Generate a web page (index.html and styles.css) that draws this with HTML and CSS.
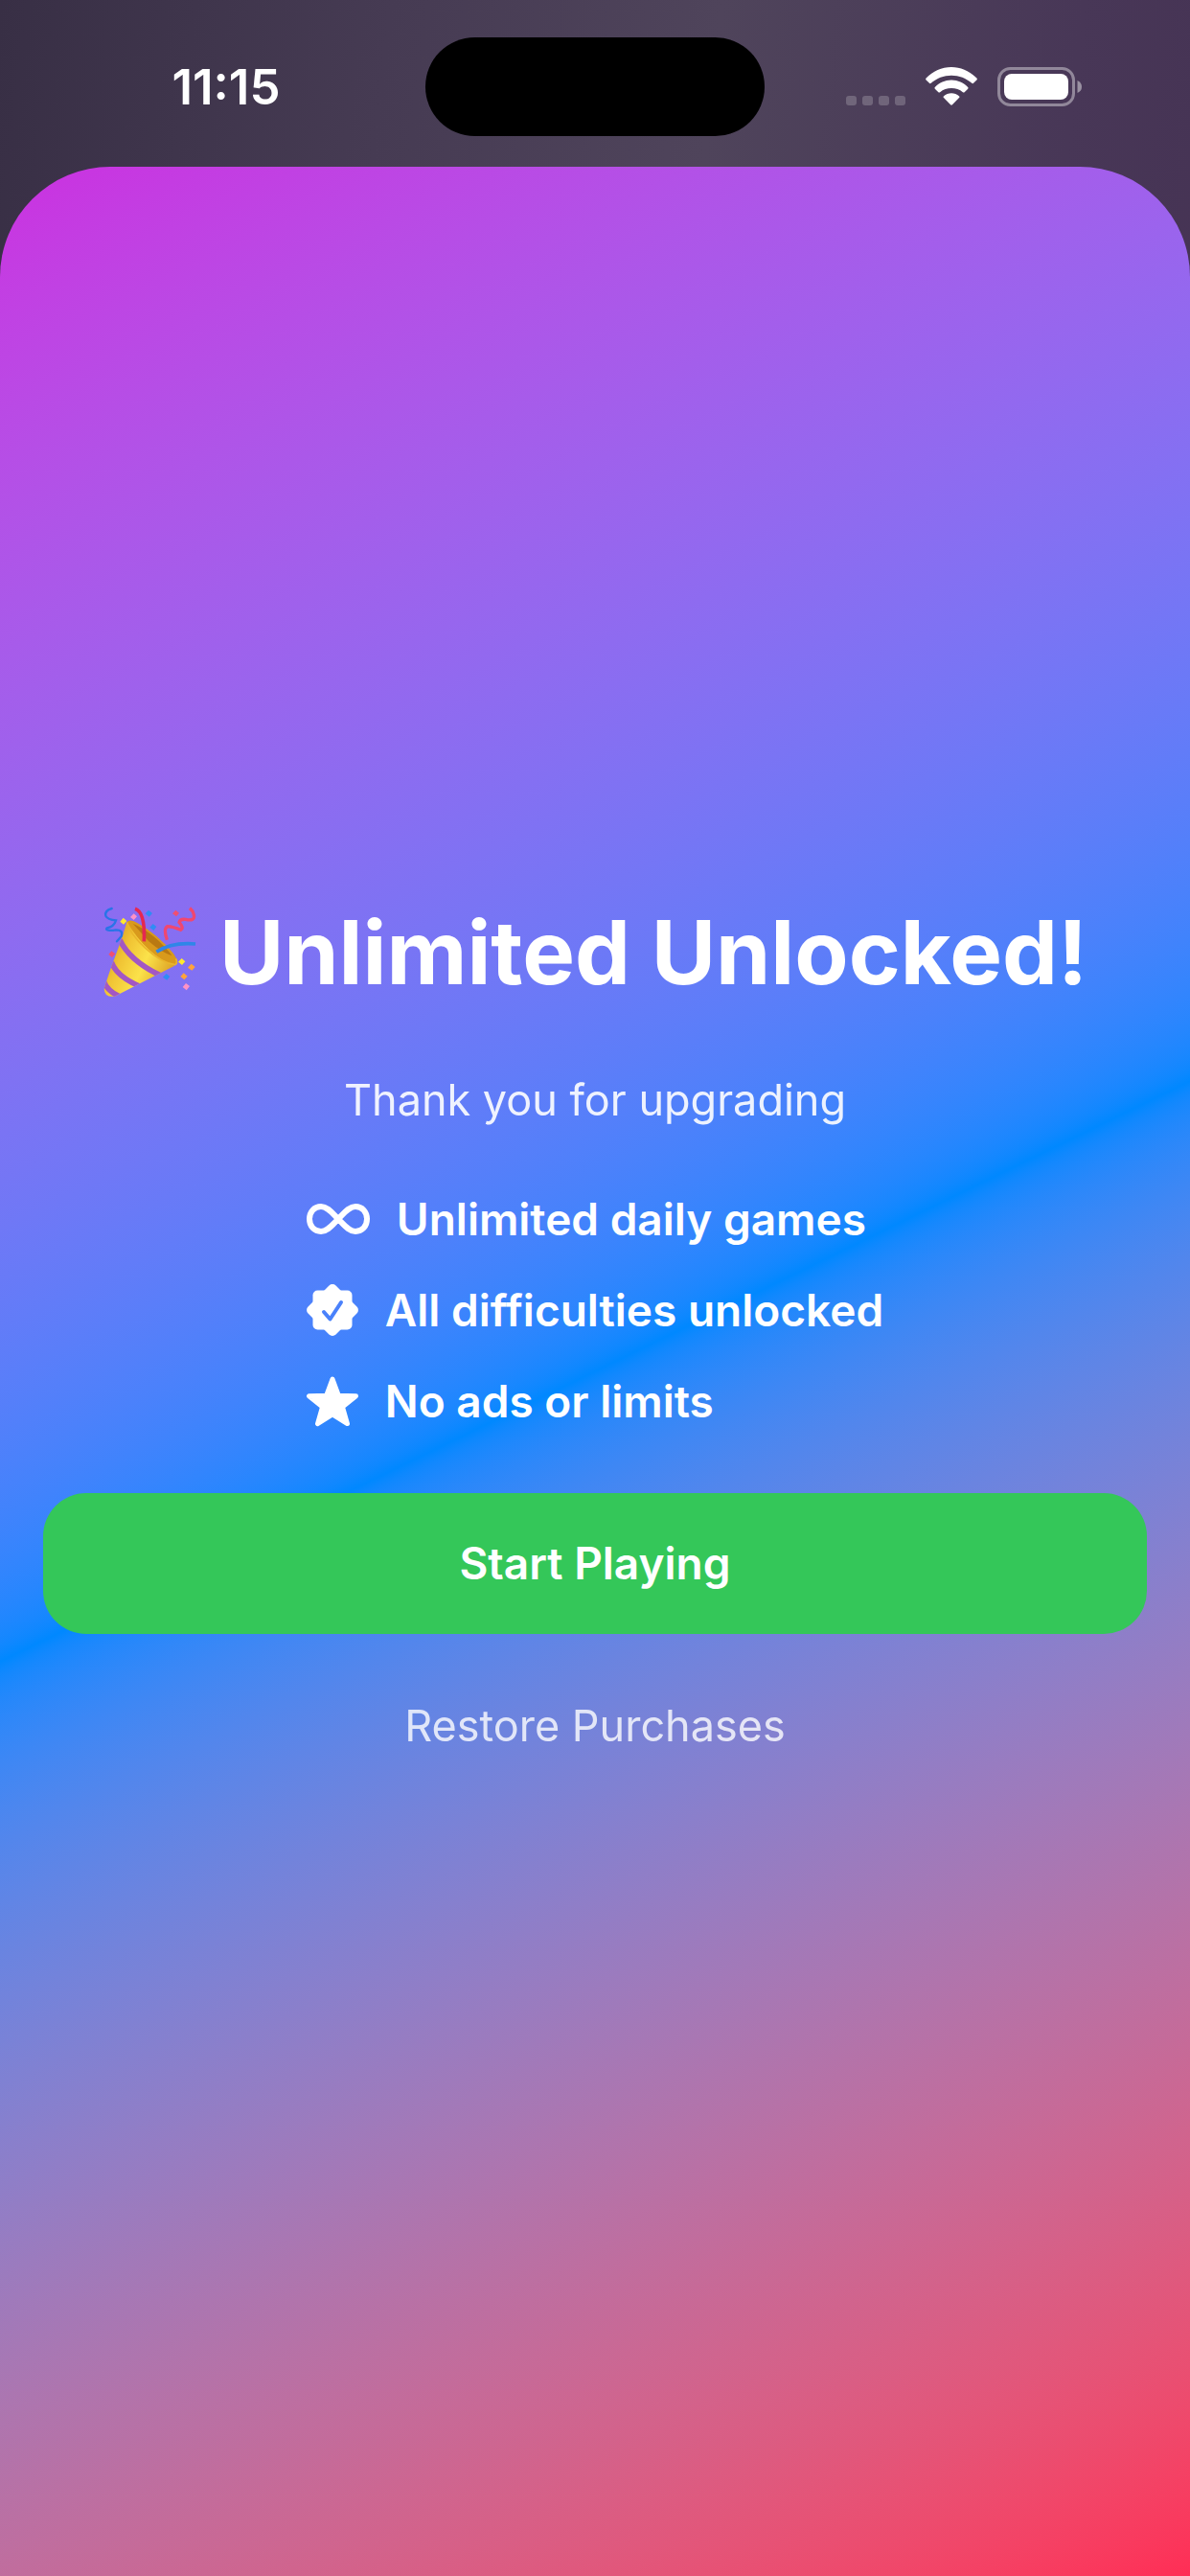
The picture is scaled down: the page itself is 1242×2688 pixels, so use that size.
FILE: index.html
```html
<!DOCTYPE html>
<html lang="en">
    <head>
        <title>Unlimited Unlocked</title>
        <meta charset="UTF-8">
        <meta name="viewport" content="width=device-width, initial-scale=1.0">
        <link rel="stylesheet" href="styles.css">
    </head>
    <body>
        <header class="status-bar">
            <div class="time">11:15</div>
            <div class="island"></div>
            <div class="indicators">
                <svg class="signal" width="62" height="40" viewBox="0 0 62 40">
                    <rect x="0" y="30" width="11" height="10" rx="3"/>
                    <rect x="17" y="30" width="11" height="10" rx="3"/>
                    <rect x="34" y="30" width="11" height="10" rx="3"/>
                    <rect x="51" y="30" width="11" height="10" rx="3"/>
                </svg>
                <svg width="54" height="40" viewBox="0 0 54 40">
                    <g fill="#fff">
                        <path d="M0.6 11.6 C7.5 4.400 17 0 27 0 S46.500 4.400 53.400 11.600 Q54.300 12.500 53.400 13.400 L50 16.800 Q49.200 17.600 48.300 16.800 C42.500 11.600 35 8.700 27 8.700 S11.500 11.600 5.700 16.800 Q4.800 17.600 4 16.800 L0.600 13.400 Q-0.300 12.500 0.600 11.600 Z"/>
                        <path d="M9.800 21 C14.300 16.500 20.300 13.600 27 13.600 S39.700 16.500 44.200 21 Q45 21.900 44.200 22.700 L40.600 26.200 Q39.800 27 38.900 26.200 C35.600 23.400 31.500 22 27 22 S18.400 23.400 15.100 26.200 Q14.200 27 13.400 26.200 L9.800 22.700 Q9 21.900 9.800 21 Z"/>
                        <path d="M19 30.300 C21.200 28.200 24 27.200 27 27.200 S32.800 28.200 35 30.300 Q35.900 31.200 35 32 L27.900 39.300 Q27 40.200 26.100 39.300 L19 32 Q18.100 31.200 19 30.300 Z"/>
                    </g>
                </svg>
                <svg width="88" height="42" viewBox="0 0 88 42">
                    <rect x="1.500" y="1.500" width="78" height="38" rx="12" fill="none" stroke="#fff" stroke-opacity=".4" stroke-width="3"/>
                    <rect x="7" y="7" width="67" height="27" rx="8" fill="#fff"/>
                    <path d="M83.500 14 Q88 16 88 20.500 T83.500 27 Z" fill="#fff" fill-opacity=".45"/>
                </svg>
            </div>
        </header>

        <main class="sheet">
            <h1 class="title">
                <!-- party popper -->
                <svg width="98" height="98" viewBox="60 80 294 290" aria-hidden="true">
                    <defs>
                        <linearGradient id="gold" x1="0" y1="0.200" x2="1" y2="0.700">
                            <stop offset="0" stop-color="#c98f1c"/>
                            <stop offset=".3" stop-color="#f0c233"/>
                            <stop offset=".6" stop-color="#fbe24a"/>
                            <stop offset="1" stop-color="#d99a20"/>
                        </linearGradient>
                        <clipPath id="cone">
                            <path d="M136 128 C120 190 85 270 65 338 Q66 366 98 362 L286 266 Q200 235 136 128 Z"/>
                        </clipPath>
                    </defs>
                    <path d="M136 130 Q146 118 170 133 Q235 170 282 228 Q302 256 288 264 Q262 272 205 222 Q150 172 136 130 Z" fill="#d99a1c"/>
                    <path d="M155 134 Q225 165 278 235 Q245 225 205 190 Z" fill="#b97912"/>
                    <path d="M136 128 C120 190 85 270 65 338 Q66 366 98 362 L286 266 Q200 235 136 128 Z" fill="url(#gold)"/>
                    <g clip-path="url(#cone)" fill="none" stroke="#a357c4" stroke-width="17">
                        <path d="M114 185 Q145 250 240 296"/>
                        <path d="M88 255 Q105 300 175 330"/>
                        <path d="M62 312 Q75 345 112 362"/>
                    </g>
                    <path d="M137 130 C147 176 230 256 287 263 Q296 258 290 244" fill="none" stroke="#eab52b" stroke-width="5"/>
                    <g fill="none" stroke-linecap="round" stroke-width="7">
                        <path d="M89 87 Q66 93 70 110 Q76 122 102 124 Q96 144 74 148 C66 156 84 157 102 154 Q126 154 119 174 L105 190" stroke="#2874e8"/>
                    </g>
                    <path d="M162 88 Q194 98 190 190" fill="none" stroke="#e52850" stroke-width="11"/>
                    <path d="M229 223 Q275 192 351 198" fill="none" stroke="#2f86e8" stroke-width="11"/>
                    <path d="M262 185 Q250 150 263 143 Q282 144 305 154 Q316 148 300 130 Q303 119 320 121 Q351 128 346 106 Q343 94 333 86" fill="none" stroke="#f04770" stroke-width="10"/>
                    <g fill="#2f8cf5">
                        <path d="M204 92 l12 10 -10 11 -12 -10z M218 135 l11 9 -9 12 -12 -10z M260 291 l11 9 -9 11 -13 -9z"/>
                    </g>
                    <g fill="#f04f72">
                        <path d="M289 92 l11 9 -9 11 -12 -9z M88 220 l12 9 -10 11 -11 -9z"/>
                    </g>
                    <g fill="#ff92c6">
                        <path d="M158 103 l10 9 -10 11 -11 -9z M321 321 l12 9 -10 13 -12 -10z"/>
                    </g>
                    <g fill="#ffe92e">
                        <path d="M125 116 l11 10 -10 11 -11 -9z M308 243 l11 10 -10 11 -12 -10z"/>
                    </g>
                    <g fill="#ffa33a">
                        <path d="M338 260 l12 10 -10 11 -13 -9z M314 289 l12 10 -10 11 -12 -10z"/>
                    </g>
                </svg>
                Unlimited Unlocked!
            </h1>

            <p class="subtitle">Thank you for upgrading</p>

            <ul class="features">
                <li>
                    <svg width="66" height="32" viewBox="0 0 66 32" aria-hidden="true">
                        <path d="M33 16 C27 10 22 3 15 3 C8 3 3 8.500 3 16 S8 29 15 29 C22 29 27 22 33 16 C39 10 44 3 51 3 C58 3 63 8.500 63 16 S58 29 51 29 C44 29 39 22 33 16 Z" fill="none" stroke="#fff" stroke-width="6"/>
                    </svg>
                    Unlimited daily games
                </li>
                <li>
                    <svg width="54" height="54" viewBox="0 0 54 54" aria-hidden="true">
                        <mask id="check">
                            <rect width="54" height="54" fill="#fff"/>
                            <path d="M18 29 L24.500 36.500 L36 19" fill="none" stroke="#000" stroke-width="4" stroke-linecap="round" stroke-linejoin="round"/>
                        </mask>
                        <g fill="#fff" mask="url(#check)">
                            <rect x="6.500" y="6.500" width="41" height="41" rx="5"/>
                            <rect x="6.500" y="6.500" width="41" height="41" rx="5" transform="rotate(45 27 27)"/>
                        </g>
                    </svg>
                    All difficulties unlocked
                </li>
                <li>
                    <svg width="54" height="54" viewBox="0 0 54 54" aria-hidden="true">
                        <path d="M27 4 L33.400 21.300 L51.500 21.800 L37.500 33.100 L42.500 50.600 L27 40.800 L11.500 50.600 L16.500 33.100 L2.500 21.800 L20.600 21.300 Z" fill="#fff" stroke="#fff" stroke-width="5" stroke-linejoin="round"/>
                    </svg>
                    No ads or limits
                </li>
            </ul>

            <button type="button" class="start">Start Playing</button>
            <button type="button" class="restore">Restore Purchases</button>
        </main>
    </body>
</html>
```

FILE: styles.css
```css
* {
    box-sizing: border-box;
}
body {
    margin: 0;
    min-height: 100vh;
    display: flex;
    flex-direction: column;
    background: linear-gradient(97deg, #382f45 0%, #463b53 26%, #4f445b 48%, #483757 72%, #422d50 100%);
    color: white;
    font-family: Inter, "Liberation Sans", sans-serif;
    font-size: 46px;
    line-height: 56px;
}
.status-bar {
    display: grid;
    grid-template-columns: 1fr 354px 1fr;
    align-items: center;
    padding: 39px 0 32px;
}
.time {
    padding-left: 28px;
    text-align: center;
    font-size: 51px;
    font-weight: 600;
}
.island {
    height: 103px;
    background: black;
    border-radius: 52px;
}
.indicators {
    display: flex;
    justify-content: center;
    gap: 21px;
    padding-right: 28px;
}
.signal {
    fill: white;
    opacity: 0.2;
}
.sheet {
    flex: 1;
    display: flex;
    flex-direction: column;
    align-items: center;
    justify-content: center;
    gap: 68px;
    padding: 0 45px 98px;
    border-radius: 115px 115px 0 0;
    background: linear-gradient(154deg in oklab, #cb30e0, #0088ff 50%, #ff2d55);
}
.title {
    display: flex;
    align-items: center;
    gap: 24px;
    margin: 0;
    font-size: 92px;
    line-height: 116px;
    font-weight: 700;
    white-space: nowrap;
}
.subtitle {
    margin: 0;
    font-size: 45px;
    opacity: 0.9;
}
.features {
    display: flex;
    flex-direction: column;
    gap: 39px;
    margin: 0;
    padding: 0;
    list-style: none;
    font-weight: 600;
}
.features li {
    display: flex;
    align-items: center;
    gap: 28px;
}
button {
    border: none;
    color: white;
    font: inherit;
    cursor: pointer;
}
.start {
    width: 100%;
    height: 147px;
    border-radius: 45px;
    background: #34c759;
    font-weight: 600;
}
.restore {
    padding: 0;
    background: none;
    font-size: 45px;
    opacity: 0.8;
}
```
